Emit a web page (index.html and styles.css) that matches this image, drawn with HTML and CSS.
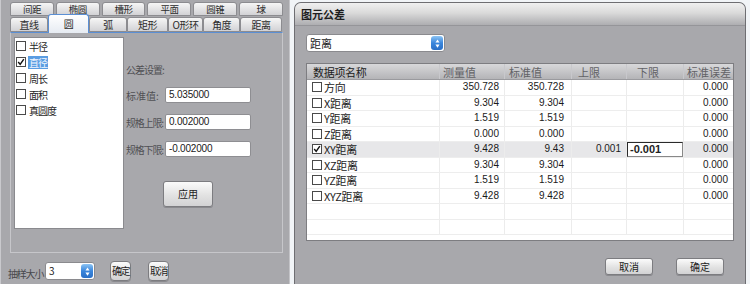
FILE: index.html
```html
<!DOCTYPE html>
<html>
<head>
<meta charset="utf-8">
<link rel="stylesheet" href="styles.css">
</head>
<body>
<div class="left">
  <div class="tabrow r1">
    <div class="tab">间距</div>
    <div class="tab">椭圆</div>
    <div class="tab">槽形</div>
    <div class="tab">平面</div>
    <div class="tab">圆锥</div>
    <div class="tab">球</div>
  </div>
  <div class="tabrow r2">
    <div class="tab t38">直线</div>
    <div class="tab t41 sel">圆</div>
    <div class="tab t38">弧</div>
    <div class="tab t41">矩形</div>
    <div class="tab t35">O形环</div>
    <div class="tab t37">角度</div>
    <div class="tab t42">距离</div>
  </div>
  <div class="pane">
    <div class="list">
      <div class="item"><span class="cb"></span><span class="lbl">半径</span></div>
      <div class="item"><span class="cb"><svg viewBox="0 0 10 10" width="8" height="8"><polyline points="1.5,5 4,8 8.5,1.5" fill="none" stroke="#111" stroke-width="1.8"/></svg></span><span class="lbl hl">直径</span></div>
      <div class="item"><span class="cb"></span><span class="lbl">周长</span></div>
      <div class="item"><span class="cb"></span><span class="lbl">面积</span></div>
      <div class="item"><span class="cb"></span><span class="lbl">真圆度</span></div>
    </div>
    <div class="form">
      <div class="ftitle">公差设置:</div>
      <div class="frow"><span class="flabel wide">标准值:</span><span class="input">5.035000</span></div>
      <div class="frow"><span class="flabel">规格上限:</span><span class="input">0.002000</span></div>
      <div class="frow"><span class="flabel">规格下限:</span><span class="input">-0.002000</span></div>
      <div class="btn apply">应用</div>
    </div>
  </div>
  <div class="bottom">
    <span class="blabel">抽样大小</span>
    <div class="select small"><span class="sval">3</span><span class="spin"><svg viewBox="0 0 10 16" width="7" height="11"><polygon points="5,2 8,6.5 2,6.5" fill="#fff"/><polygon points="5,14 8,9.5 2,9.5" fill="#fff"/></svg></span></div>
    <div class="btn sbtn ok">确定</div>
    <div class="btn sbtn cancel">取消</div>
  </div>
</div>
<div class="gap"></div>
<div class="right">
  <div class="title">图元公差</div>
  <div class="rbody">
    <div class="select big"><span class="sval">距离</span><span class="spin"><svg viewBox="0 0 10 16" width="7" height="11"><polygon points="5,2 8,6.5 2,6.5" fill="#fff"/><polygon points="5,14 8,9.5 2,9.5" fill="#fff"/></svg></span></div>
    <div class="table">
      <div class="row head">
        <div class="c c1">数据项名称</div>
        <div class="c c2">测量值</div>
        <div class="c c3">标准值</div>
        <div class="c c4">上限</div>
        <div class="c c5">下限</div>
        <div class="c c6">标准误差</div>
      </div>
      <div class="row"><div class="c c1"><span class="cb"></span>方向</div><div class="c c2 n">350.728</div><div class="c c3 n">350.728</div><div class="c c4 n"></div><div class="c c5 n"></div><div class="c c6 n">0.000</div></div>
      <div class="row"><div class="c c1"><span class="cb"></span>X距离</div><div class="c c2 n">9.304</div><div class="c c3 n">9.304</div><div class="c c4 n"></div><div class="c c5 n"></div><div class="c c6 n">0.000</div></div>
      <div class="row"><div class="c c1"><span class="cb"></span>Y距离</div><div class="c c2 n">1.519</div><div class="c c3 n">1.519</div><div class="c c4 n"></div><div class="c c5 n"></div><div class="c c6 n">0.000</div></div>
      <div class="row"><div class="c c1"><span class="cb"></span>Z距离</div><div class="c c2 n">0.000</div><div class="c c3 n">0.000</div><div class="c c4 n"></div><div class="c c5 n"></div><div class="c c6 n">0.000</div></div>
      <div class="row selrow"><div class="c c1"><span class="cb"><svg viewBox="0 0 10 10" width="8" height="8"><polyline points="1.5,5 4,8 8.5,1.5" fill="none" stroke="#111" stroke-width="1.8"/></svg></span>XY距离</div><div class="c c2 n">9.428</div><div class="c c3 n">9.43</div><div class="c c4 n">0.001</div><div class="c c5 edit"><span class="editbox">-0.001</span></div><div class="c c6 n">0.000</div></div>
      <div class="row"><div class="c c1"><span class="cb"></span>XZ距离</div><div class="c c2 n">9.304</div><div class="c c3 n">9.304</div><div class="c c4 n"></div><div class="c c5 n"></div><div class="c c6 n">0.000</div></div>
      <div class="row"><div class="c c1"><span class="cb"></span>YZ距离</div><div class="c c2 n">1.519</div><div class="c c3 n">1.519</div><div class="c c4 n"></div><div class="c c5 n"></div><div class="c c6 n">0.000</div></div>
      <div class="row"><div class="c c1"><span class="cb"></span>XYZ距离</div><div class="c c2 n">9.428</div><div class="c c3 n">9.428</div><div class="c c4 n"></div><div class="c c5 n"></div><div class="c c6 n">0.000</div></div>
      <div class="row"><div class="c c1"></div><div class="c c2"></div><div class="c c3"></div><div class="c c4"></div><div class="c c5"></div><div class="c c6"></div></div>
      <div class="row"><div class="c c1"></div><div class="c c2"></div><div class="c c3"></div><div class="c c4"></div><div class="c c5"></div><div class="c c6"></div></div>
    </div>
    <div class="rbtns">
      <div class="btn rbtn">取消</div>
      <div class="btn rbtn">确定</div>
    </div>
  </div>
</div>
</body>
</html>
```

FILE: styles.css
```css
* { box-sizing: border-box; margin: 0; padding: 0; }
html, body { width: 750px; height: 284px; overflow: hidden; }
body {
  display: flex;
  background: #f1f4f7;
  font-family: "Noto Sans CJK SC", "Liberation Sans", sans-serif;
  color: #222;
}

/* ---------- left panel ---------- */
.left {
  width: 290px;
  height: 284px;
  background: #a8a8ac;
  border-left: 1px solid #c9c9cd;
  border-right: 1px solid #c4c4c8;
  padding: 2px 6px 0 9px;
  font-size: 10px;
}
.tabrow { display: flex; }
.r1 { gap: 2px; height: 14px; }
.r2 { margin-top: 1px; height: 15px; }
.tab {
  background: linear-gradient(#f6f6f6, #d2d2d5);
  border: 1px solid #8c8c90;
  border-radius: 3px 3px 0 0;
  text-align: center;
  color: #2c2c2c;
  font-size: 10px;
  letter-spacing: -0.5px;
  white-space: nowrap;
}
.r1 .tab { flex: 1; font-size: 9.5px; line-height: 12px; }
.r2 .tab { line-height: 13px; }
.t35 { width: 35px; }
.t37 { width: 37px; }
.t38 { width: 38px; }
.t41 { width: 41px; }
.t42 { width: 42px; }
.r2 .tab.sel {
  height: 19px;
  margin-top: -3px;
  background: linear-gradient(#ffffff, #e6ebf2);
  border-color: #5b8fd4;
  border-bottom: none;
  line-height: 17px;
  position: relative;
  z-index: 2;
}
.pane {
  width: 273px;
  height: 221px;
  border: 1px solid #c6c6ca;
  border-top: 1px solid #5b8fd4;
  padding: 4px 3px;
  display: flex;
  align-items: flex-start;
}
.list {
  width: 110px;
  height: 192px;
  background: #fff;
  border: 1px solid #8a8a8e;
}
.item {
  height: 16px;
  display: flex;
  align-items: center;
  padding-left: 1px;
}
.cb {
  width: 10px;
  height: 10px;
  border: 1px solid #4a4a4a;
  background: #fff;
  display: inline-flex;
  align-items: center;
  justify-content: center;
  flex: none;
}
.lbl {
  margin-left: 2px;
  font-size: 10px;
  letter-spacing: -1px;
  line-height: 13px;
  padding: 0 1px;
  color: #1e1e1e;
}
.lbl.hl { background: #5a9de2; color: #f4f8ff; }

.form {
  margin-left: 2px;
  width: 150px;
  color: #505054;
}
.ftitle {
  margin-top: 26px;
  height: 14px;
  line-height: 14px;
  letter-spacing: -1px;
  font-size: 10px;
}
.frow {
  display: flex;
  align-items: center;
  height: 16px;
  margin-top: 10px;
}
.frow + .frow { margin-top: 11px; }
.flabel {
  width: 39px;
  font-size: 10px;
  letter-spacing: -1.2px;
  white-space: nowrap;
}
.flabel.wide { letter-spacing: 0; }
.input {
  width: 86px;
  height: 16px;
  background: #fff;
  border: 1px solid #8e8e92;
  border-radius: 2px;
  font-family: "Liberation Sans", sans-serif;
  font-size: 10px;
  line-height: 14px;
  padding-left: 3px;
  color: #1a1a1a;
  letter-spacing: -0.2px;
}
.btn {
  background: linear-gradient(#fbfbfb, #e2e2e2 55%, #d2d2d4);
  border: 1px solid #7c7c80;
  border-radius: 3px;
  text-align: center;
  color: #222;
  box-shadow: 0 1px 0 #8a8a8e;
}
.apply {
  margin: 24px 0 0 37px;
  width: 50px;
  height: 26px;
  line-height: 24px;
  font-size: 10px;
}

.bottom {
  display: flex;
  align-items: center;
  height: 20px;
  margin-top: 8px;
  margin-left: -2px;
}
.blabel {
  width: 37px;
  font-size: 10px;
  letter-spacing: -1.2px;
  color: #47474b;
  align-self: flex-end;
  line-height: 14px;
}
.select {
  background: #fff;
  border: 1px solid #8a8a8e;
  border-radius: 3px;
  display: flex;
  align-items: center;
  justify-content: space-between;
  padding: 1px 1px 1px 3px;
}
.select.small { width: 50px; height: 18px; }
.select .sval { font-size: 10px; line-height: 14px; }
.spin {
  width: 12px;
  height: 14px;
  border-radius: 3px;
  background: linear-gradient(#8cc4f4, #3a86dc 50%, #2a6fc6);
  display: flex;
  align-items: center;
  justify-content: center;
}
.sbtn {
  width: 21px;
  height: 20px;
  font-size: 10px;
  line-height: 18px;
  letter-spacing: -1.5px;
  border-radius: 4px;
}
.ok { margin-left: 15px; }
.cancel { margin-left: 17px; }

.gap { width: 4px; }

/* ---------- right panel ---------- */
.right {
  width: 452px;
  height: 282px;
  margin-top: 2px;
  background: #a8a8ac;
  border: 1px solid #6e6e72;
  border-bottom: none;
  border-radius: 7px 7px 0 0;
  overflow: hidden;
}
.title {
  height: 23px;
  background: linear-gradient(#f0f0f0, #dadada 45%, #bdbdbf 80%, #aeaeb1);
  border-bottom: 1px solid #959599;
  font-weight: bold;
  font-size: 11px;
  line-height: 22px;
  padding-left: 6px;
  color: #1e1e1e;
}
.rbody { padding: 8px 0 0 11px; }
.select.big { width: 139px; height: 18px; }
.select.big .sval { font-size: 11px; }
.table {
  margin-top: 11px;
  width: 428px;
  height: 178px;
  background: #fff;
  border: 1px solid #7d7d81;
  overflow: hidden;
}
.row {
  display: grid;
  grid-template-columns: 133px 65px 67px 55px 57px 49px;
  height: 15.5px;
  border-bottom: 1px solid #ededed;
  font-size: 11px;
}
.row.head {
  height: 16px;
  background: linear-gradient(#d8d8da, #b4b4b7);
  border-bottom: 1px solid #9a9a9e;
  color: #626266;
  font-size: 11px;
  line-height: 15px;
}
.row.selrow { background: #e7e7e9; }
.c {
  border-right: 1px solid #ececec;
  white-space: nowrap;
  overflow: hidden;
  line-height: 14px;
  display: flex;
  align-items: center;
}
.head .c { border-right: 1px solid #c8c8cc; }
.c6 { border-right: none; }
.head .c6 { border-right: none; }
.head .c1 { padding-left: 6px; }
.head .c2 { padding-left: 3px; }
.head .c3 { padding-left: 4px; }
.head .c4 { padding-left: 6px; }
.head .c5 { padding-left: 10px; }
.head .c6 { justify-content: flex-end; padding-right: 2px; }
.row .c1 .cb { margin: 0 2px 0 5px; }
.row .c1 { color: #1c1c1c; letter-spacing: -0.3px; }
.n {
  justify-content: flex-end;
  font-family: "Liberation Sans", sans-serif;
  font-size: 10px;
  color: #1a1a1a;
  padding-right: 5px;
}
.c3.n { padding-right: 7px; }
.edit { padding: 0; }
.editbox {
  width: 100%;
  height: 15px;
  border: 1px solid #2a2a2a;
  border-right-color: #888;
  border-bottom-color: #888;
  background: #fff;
  font-family: "Liberation Sans", sans-serif;
  font-weight: bold;
  font-size: 11px;
  line-height: 13px;
  padding-left: 2px;
}
.rbtns {
  display: flex;
  justify-content: flex-end;
  gap: 23px;
  margin-top: 17px;
  padding-right: 21px;
}
.rbtn {
  width: 48px;
  height: 17px;
  font-size: 10px;
  line-height: 15px;
  border-radius: 3px;
}
```
